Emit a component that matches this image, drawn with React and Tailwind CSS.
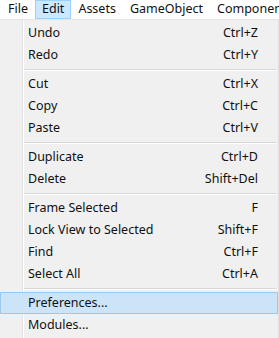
import React from "react";

const groups = [
  [
    ["Undo", "Ctrl+Z"],
    ["Redo", "Ctrl+Y"],
  ],
  [
    ["Cut", "Ctrl+X"],
    ["Copy", "Ctrl+C"],
    ["Paste", "Ctrl+V"],
  ],
  [
    ["Duplicate", "Ctrl+D"],
    ["Delete", "Shift+Del"],
  ],
  [
    ["Frame Selected", "F"],
    ["Lock View to Selected", "Shift+F"],
    ["Find", "Ctrl+F"],
    ["Select All", "Ctrl+A"],
  ],
  [
    ["Preferences...", "", true],
    ["Modules...", ""],
  ],
];

const MenuItem = ({ label, shortcut, active }) => (
  <div
    className={`relative flex h-[22px] items-center pl-[28px] pr-[20px] ${
      active ? "bg-[#cce4f7] outline outline-1 -outline-offset-1 outline-[#99c9ef]" : ""
    }`}
  >
    <span className="flex-1">{label}</span>
    <span>{shortcut}</span>
  </div>
);

const Separator = () => (
  <div className="flex h-[7px] flex-col justify-center pl-[24px] pr-[2px]">
    <div className="h-px bg-[#d7d7d7]" />
    <div className="h-px bg-white" />
  </div>
);

export default function App() {
  return (
    <div
      className="h-[338px] w-[279px] overflow-hidden bg-[#f0f0f0] text-[12.5px] text-[#111]"
      style={{ fontFamily: '"Noto Sans", "Noto Sans CJK SC", sans-serif' }}
    >
      {/* Menu bar */}
      <div className="flex h-[20px] items-center overflow-hidden border-b border-[#e5e5e5] bg-white whitespace-nowrap">
        <div className="flex h-full shrink-0 items-center pl-[8px] pr-[7px]">File</div>
        <div className="flex h-full shrink-0 items-center border border-[#99d1ff] bg-[#cce8ff] px-[6px]">Edit</div>
        <div className="flex h-full shrink-0 items-center px-[7px]">Assets</div>
        <div className="flex h-full shrink-0 items-center px-[7px]">GameObject</div>
        <div className="flex h-full shrink-0 items-center px-[7px]">Component</div>
      </div>

      {/* Dropdown */}
      <div className="relative h-[318px] border-r border-[#e0e0e0] pt-[2px]">
        <div className="absolute left-[22px] top-0 h-full w-px bg-[#e2e2e2]" />
        <div className="absolute left-[23px] top-0 h-full w-px bg-white" />
        {groups.map((g, i) => (
          <React.Fragment key={i}>
            {i > 0 && <Separator />}
            {g.map(([label, shortcut, active]) => (
              <MenuItem key={label} label={label} shortcut={shortcut} active={active} />
            ))}
          </React.Fragment>
        ))}
      </div>
    </div>
  );
}
